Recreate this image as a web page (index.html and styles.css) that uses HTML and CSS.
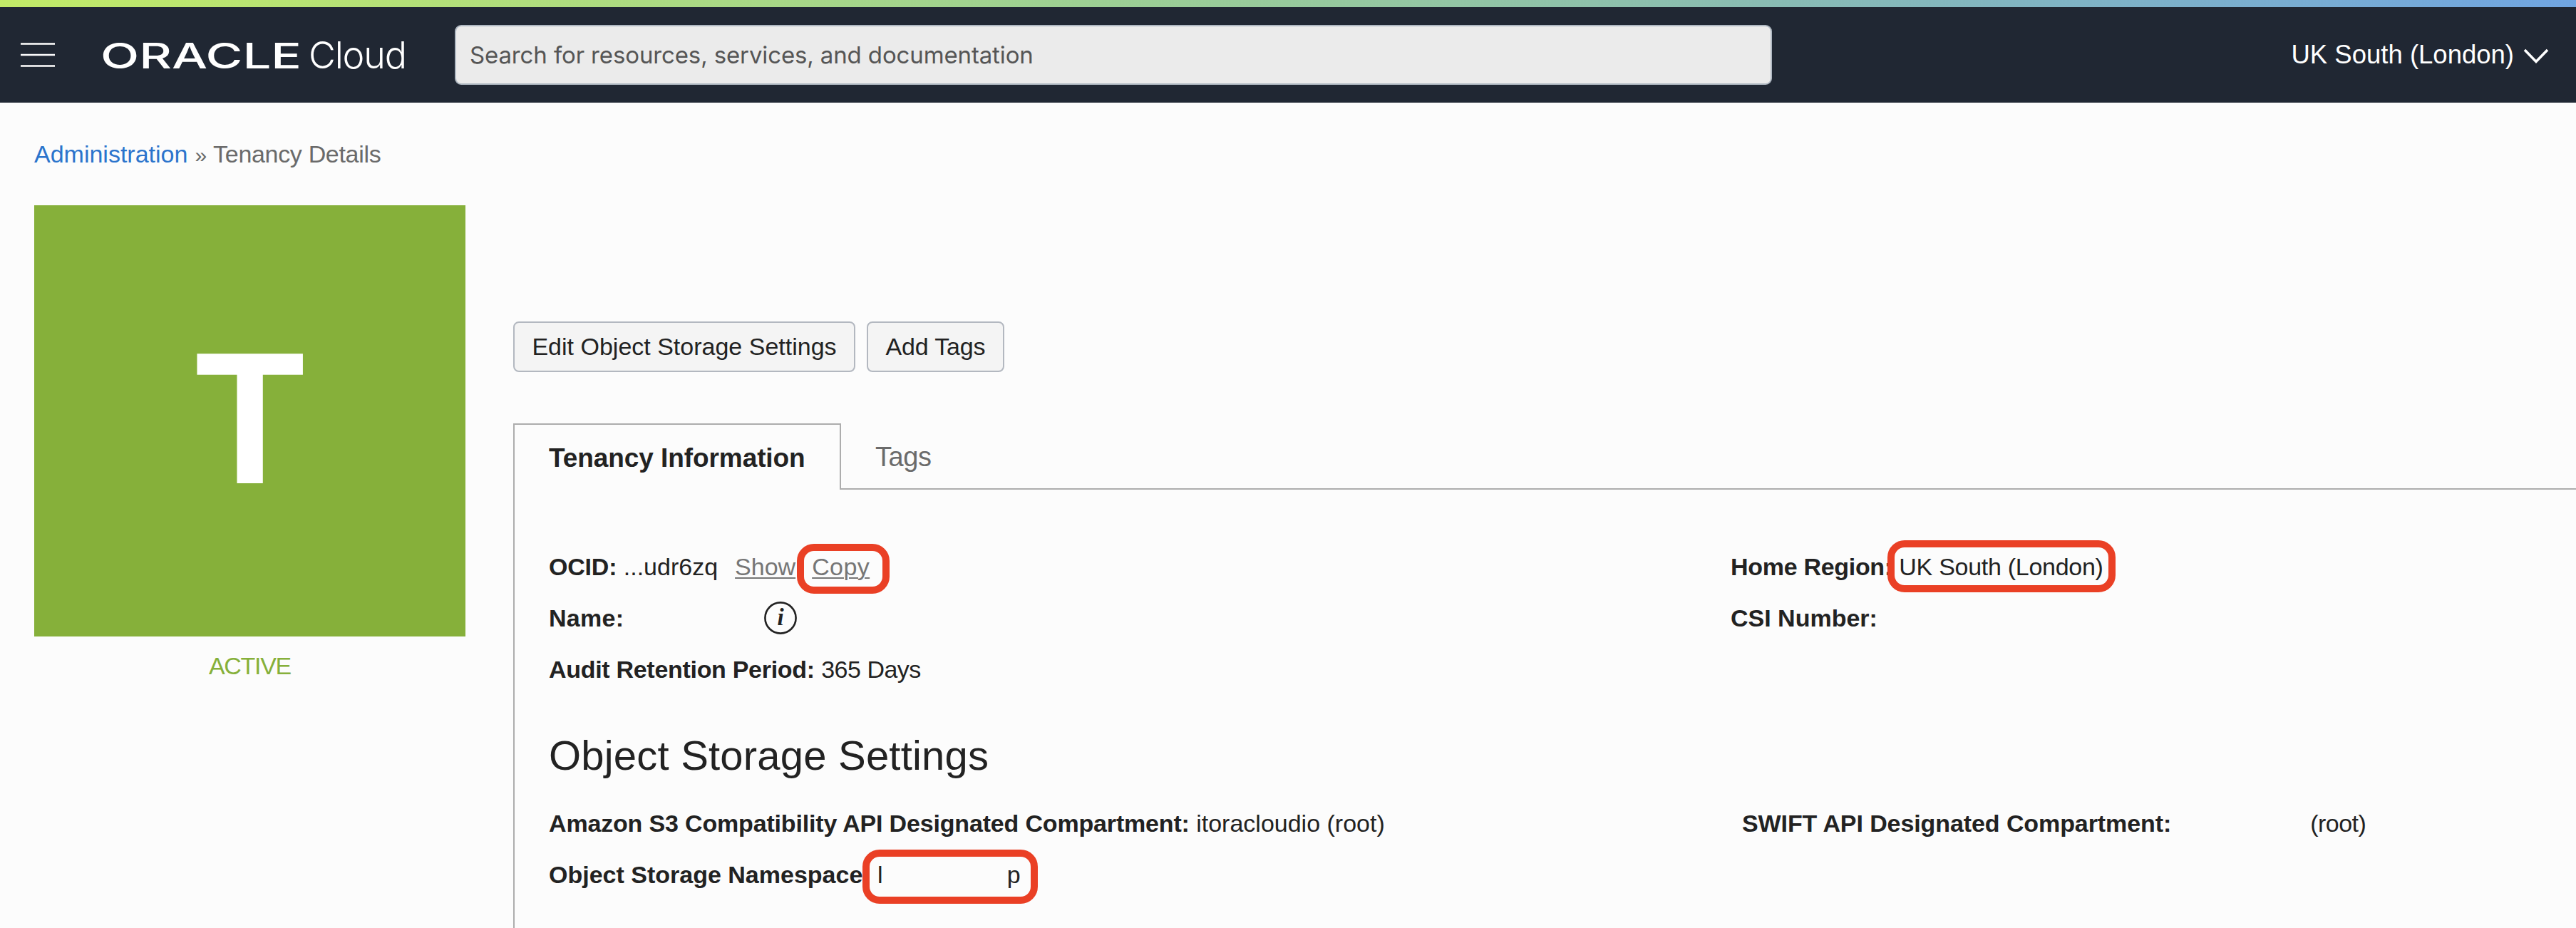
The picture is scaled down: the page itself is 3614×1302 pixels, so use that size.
FILE: index.html
```html
<!DOCTYPE html>
<html lang="en">
<head>
<meta charset="utf-8">
<title>Tenancy Details</title>
<link rel="stylesheet" href="styles.css">
</head>
<body>
<header class="topbar">
  <svg class="menu-icon" viewBox="0 0 48 34" aria-label="Menu"><path d="M0 1.5H48M0 17H48M0 32.5H48" stroke="#fff" stroke-width="2.6"/></svg>
  <svg class="brand" viewBox="0 0 440 134" role="img" aria-label="Oracle Cloud">
    <text class="brand-oracle" x="-1" y="86" textLength="282" lengthAdjust="spacingAndGlyphs">ORACLE</text>
    <text class="brand-cloud" x="291" y="86">Cloud</text>
  </svg>
  <div class="search">Search for resources, services, and documentation</div>
  <div class="region">
    <span>UK South (London)</span>
    <svg class="chevron" viewBox="0 0 36 22"><path d="M2 2L18 18.5L34 2" fill="none" stroke="#fff" stroke-width="3.6"/></svg>
  </div>
</header>
<main class="page">
  <nav class="breadcrumb"><a class="crumb-link">Administration</a><span class="crumb-sep">»</span><span class="crumb-current">Tenancy Details</span></nav>
  <div class="columns">
    <aside class="status">
      <div class="tile"><span class="tile-letter">T</span></div>
      <div class="state">ACTIVE</div>
    </aside>
    <section class="details">
      <div class="actions">
        <button class="btn btn-edit">Edit Object Storage Settings</button>
        <button class="btn btn-tags">Add Tags</button>
      </div>
      <div class="tabs">
        <div class="tab tab-active">Tenancy Information</div>
        <div class="tab tab-idle">Tags</div>
      </div>
      <div class="panel">
        <div class="info">
          <div class="info-col">
            <div class="row"><b class="ocid">OCID:</b> ...udr6zq<a class="link link-show">Show</a><a class="link link-copy">Copy<i class="mark mark-copy"></i></a></div>
            <div class="row row-name"><b class="name">Name:</b>
              <svg class="info-icon" viewBox="0 0 46 46"><circle cx="23" cy="23" r="21.6" fill="none" stroke="#222" stroke-width="2.6"/><text x="23" y="33" text-anchor="middle">i</text></svg>
            </div>
            <div class="row"><b class="audit">Audit Retention Period:</b> <span class="days">365 Days</span></div>
          </div>
          <div class="info-col">
            <div class="row"><b class="home">Home Region:</b> <span class="value region-value">UK South (London)<i class="mark mark-region"></i></span></div>
            <div class="row"><b>CSI Number:</b></div>
          </div>
        </div>
        <h2 class="heading">Object Storage Settings</h2>
        <div class="info info-storage">
          <div class="info-col">
            <div class="row"><b class="amazon">Amazon S3 Compatibility API Designated Compartment:</b> itoracloudio (root)</div>
            <div class="row"><b>Object Storage Namespace:</b> <span class="value namespace"><span>l</span><span>p</span><i class="mark mark-namespace"></i></span></div>
          </div>
          <div class="info-col">
            <div class="row"><b class="swift">SWIFT API Designated Compartment:</b><span class="root">(root)</span></div>
          </div>
        </div>
      </div>
    </section>
  </div>
</main>
</body>
</html>
```
FILE: styles.css
```css
* { box-sizing: border-box; }
body {
  margin: 0;
  height: 1302px;
  overflow: hidden;
  display: flex;
  flex-direction: column;
  background: #fcfcfc;
  color: #222;
  font: 34px/40px "Liberation Sans", Arial, sans-serif;
}

/* Top bar */
.topbar {
  flex: none;
  display: flex;
  align-items: center;
  height: 144px;
  padding: 10px 38px 0 29px;
  background: linear-gradient(90deg, #c2eb68, #9dd093 42%, #8abdb1 67%, #70a5e2) 0 0 / 100% 10px no-repeat, #202733;
  color: #fff;
}
.menu-icon { width: 48px; height: 34px; }
.brand { width: 440px; height: 134px; margin-left: 65px; fill: #fff; overflow: visible; }
.brand-oracle { font: 500 50px Inter, sans-serif; }
.brand-cloud { font: 300 52px Inter, sans-serif; letter-spacing: -1.2px; }
.search {
  width: 1848px;
  height: 84px;
  margin-left: 56px;
  padding-left: 19px;
  border: 2px solid #afb8c2;
  border-radius: 9px;
  background: #ebebeb;
  color: #555;
  font: 33px/80px Inter, sans-serif;
  letter-spacing: -0.13px;
}
.region {
  display: flex;
  align-items: center;
  gap: 13px;
  margin-left: auto;
  font-size: 36.5px;
}
.chevron { width: 36px; height: 22px; margin-top: 3px; }

/* Page */
.page { flex: 1; min-height: 0; display: flex; flex-direction: column; padding: 52px 0 0 48px; }
.breadcrumb { flex: none; height: 40px; margin-bottom: 52px; color: #6a6a6a; white-space: nowrap; }
.crumb-link { color: #2b74cc; }
.crumb-sep { margin: 0 9px 0 10px; font-size: 30px; line-height: 30px; }
.crumb-current { letter-spacing: -0.32px; }
.columns { flex: 1; min-height: 0; display: flex; gap: 67px; }

.status { width: 605px; text-align: center; color: #86b03a; }
.tile { height: 605px; background: #86b03a; color: #fff; }
.tile-letter {
  display: inline-block;
  font-weight: 700;
  font-size: 264px;
  line-height: 597px;
  transform: scaleX(0.955);
}
.state { margin-top: 17px; line-height: 48px; letter-spacing: -1.3px; }

.details { flex: 1; display: flex; flex-direction: column; padding-top: 163px; }
.actions { display: flex; gap: 16px; margin-bottom: 72px; }
.btn {
  height: 71px;
  padding: 0;
  border: 2px solid #b3b8c0;
  border-radius: 8px;
  background: #f4f4f4;
  color: #222;
  font: inherit;
  line-height: 67px;
}
.btn-edit { width: 480px; }
.btn-tags { width: 193px; letter-spacing: -0.15px; }

.tabs { display: flex; height: 93px; }
.tab { line-height: 44px; }
.tab-active {
  width: 460px;
  padding: 25px 0 0 48px;
  border: 2px solid #adadad;
  border-bottom: 0;
  font-weight: 700;
  font-size: 37px;
  letter-spacing: -0.08px;
}
.tab-idle {
  flex: 1;
  padding: 25px 0 0 48px;
  border-bottom: 2px solid #adadad;
  color: #6b6b6b;
  font-size: 38px;
  letter-spacing: -0.4px;
}

.panel { flex: 1; padding: 72px 0 0 48px; border-left: 2px solid #adadad; }
.info { display: grid; grid-template-columns: 1658px 1fr; }
.info-storage { grid-template-columns: 1674px 1fr; }
.row { height: 72px; line-height: 72px; white-space: nowrap; }
.row-name { display: flex; align-items: center; }
.name { width: 302px; letter-spacing: 0.3px; }
.info-icon { width: 46px; height: 46px; }
.info-icon text { fill: #222; font: italic 700 33px "Liberation Serif", serif; }
.ocid { letter-spacing: -0.2px; }
.audit { letter-spacing: -0.3px; }
.days { letter-spacing: -0.5px; }
.home { letter-spacing: -0.3px; }
.amazon { letter-spacing: -0.17px; }
.swift { letter-spacing: -0.09px; }
.root { margin-left: 195px; letter-spacing: -0.5px; }
.link {
  color: #767676;
  text-decoration: underline 2.4px;
  text-underline-offset: 3px;
}
.link-show { margin-left: 24px; }
.link-copy { position: relative; display: inline-block; margin-left: 23px; letter-spacing: 0.4px; }
.value { position: relative; display: inline-block; }
.region-value { letter-spacing: -0.28px; }
.namespace span + span { margin-left: 174px; }

.heading {
  margin: 45px 0 19px;
  font-weight: 400;
  font-size: 58px;
  line-height: 80px;
  letter-spacing: 0.2px;
}

/* Red callouts drawn over the values */
.mark { position: absolute; border: 10px solid #ea4025; border-radius: 24px; }
.mark-copy { left: -21px; top: 4px; width: 130px; height: 70px; }
.mark-region { left: -16px; top: -1px; width: 320px; height: 73px; }
.mark-namespace { left: -21px; top: 1px; width: 246px; height: 76px; }
```
